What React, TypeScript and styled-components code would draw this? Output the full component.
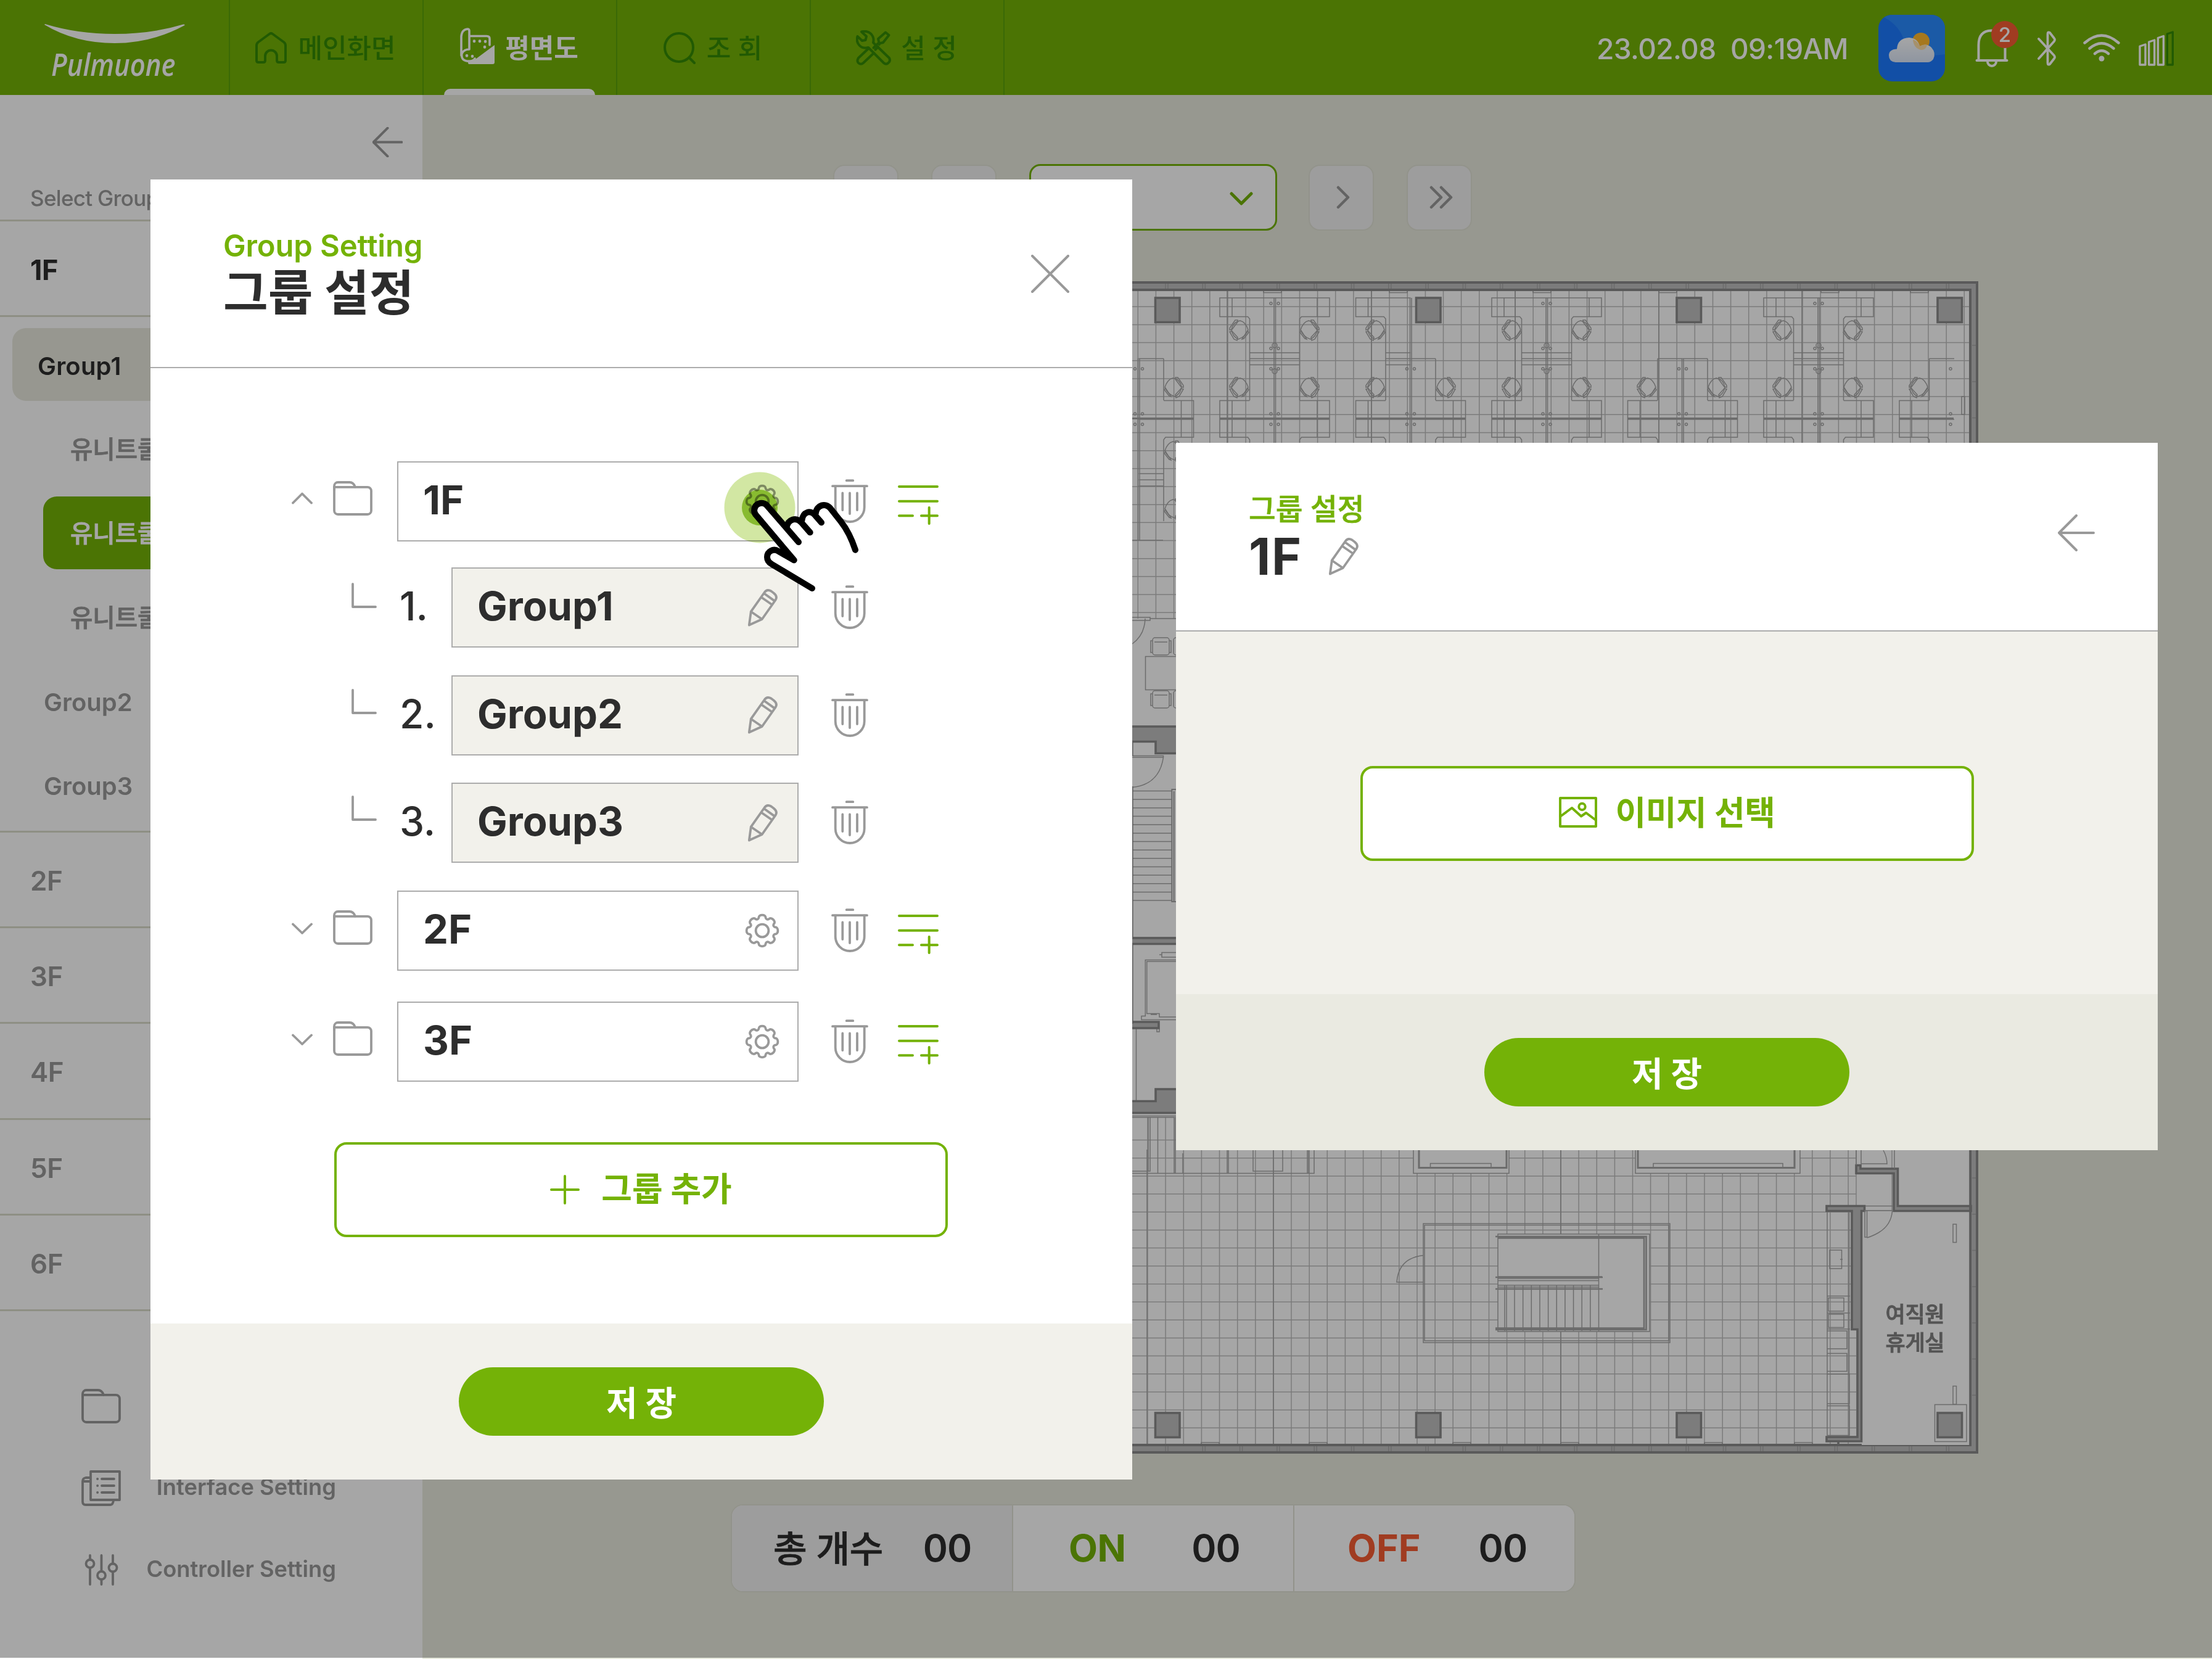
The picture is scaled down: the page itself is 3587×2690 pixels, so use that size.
import React from "react";
import styled, { createGlobalStyle } from "styled-components";

const GREEN = "#74b207";
const DEEP_GREEN = "#348a06";
const INK = "#2d2d2d";
const GRAY = "#999999";
const RULE = "#acacac";
const RED = "#f65c34";
const CANVAS = "#e8eade";

const GlobalStyle = createGlobalStyle`
  *, *::before, *::after { box-sizing: border-box; }
  body { margin: 0; background: ${CANVAS}; }
  svg { display: block; flex: none; }
`;

const Screen = styled.div`
  position: relative;
  width: 3587px;
  height: 2690px;
  overflow: hidden;
  display: flex;
  flex-direction: column;
  background: ${CANVAS};
  font-family: Inter, "Noto Sans CJK KR", sans-serif;
  color: ${INK};
`;

const Label = styled.span<{ $size: number; $weight?: number; $color?: string; $track?: number; $drop?: number; $bolder?: number }>`
  font-size: ${(p) => p.$size}px;
  font-weight: ${(p) => p.$weight ?? 500};
  color: ${(p) => p.$color ?? INK};
  letter-spacing: ${(p) => p.$track ?? 0}em;
  line-height: 1;
  white-space: pre;
  margin-top: ${(p) => p.$drop ?? 0}px;
  -webkit-text-stroke: ${(p) => p.$bolder ?? 0}px currentColor;
`;

/* ---------- icons ---------- */

const Stroke = styled.svg<{ $color?: string; $w?: number }>`
  fill: none;
  stroke: ${(p) => p.$color ?? GRAY};
  stroke-width: ${(p) => p.$w ?? 3.8};
  stroke-linecap: round;
  stroke-linejoin: round;
`;

const FolderIcon = () => (
  <Stroke width="64" height="56" viewBox="0 0 64 56">
    <path d="M2 14V8a6 6 0 0 1 6-6H27Q33 2 36 9.6" />
    <path d="M2 9.8H56a6 6 0 0 1 6 6V48a6 6 0 0 1-6 6H8a6 6 0 0 1-6-6Z" />
  </Stroke>
);

const TrashIcon = () => (
  <Stroke width="60" height="72" viewBox="0 0 60 72">
    <path d="M24.7 2.2H35.3M2 11.2H58M6.7 11.2V45.5a23.5 23.5 0 0 0 47 0V11.2M18.3 22.5V50M30 22.5V56M42 22.5V50" />
  </Stroke>
);

const ListAddIcon = () => (
  <Stroke width="66" height="66" viewBox="0 0 66 66" $color={GREEN} $w={4}>
    <path d="M2 4H64M2 27.7H64M2 51.3H24M38 51.3H64M50.7 38V64" />
  </Stroke>
);

const PencilIcon = () => (
  <Stroke width="48" height="61" viewBox="0 0 48 61">
    <path d="M1.8 58.5L4.8 36.7L26 6.5Q30.5 -0.5 37.5 3.5L41.5 6.5Q48.5 12 44.5 18L22.7 49ZM4.8 36.7L22.7 49M22 13.7L37.5 24.5M26.5 7.5L42 18.6" />
  </Stroke>
);

const gearPath = (() => {
  let d = "";
  for (let i = 0; i < 8; i++) {
    const p = (deg: number, r: number) => {
      const a = ((i * 45 + deg - 90) * Math.PI) / 180;
      return `${(28 + r * Math.cos(a)).toFixed(2)} ${(28 + r * Math.sin(a)).toFixed(2)}`;
    };
    if (i === 0) d += `M${p(-15, 21.6)}`;
    d += `C${p(-13, 27.6)} ${p(13, 27.6)} ${p(15, 21.6)}Q${p(22.5, 18.4)} ${p(30, 21.6)}`;
  }
  return d + "Z";
})();

const GearIcon = () => (
  <Stroke width="56" height="56" viewBox="0 0 56 56">
    <path d={gearPath} />
    <circle cx="28" cy="28" r="10.4" />
  </Stroke>
);

const ChevronIcon = ({ up }: { up?: boolean }) => (
  <Stroke width="34" height="22" viewBox="0 0 34 22">
    <path d={up ? "M2 18.500L17 3.500L32 18.500" : "M2 5.500L17 20L32 5.500"} />
  </Stroke>
);

const ElbowIcon = () => (
  <Stroke width="41" height="41" viewBox="0 0 41 41">
    <path d="M2 2V39H39" />
  </Stroke>
);

const ArrowLeftIcon = ({ size, w }: { size: number; w?: number }) => (
  <Stroke width={size} height={size} viewBox="0 0 60 60" $w={w ?? 4}>
    <path d="M58 30H2M30 2L2 30L30 58" />
  </Stroke>
);

const HomeIcon = () => (
  <Stroke width="51" height="51" viewBox="0 0 51 51" $color={DEEP_GREEN} $w={4}>
    <path d="M28 3L46.5 16.5Q49 18.5 49 22V46Q49 49 46 49H38Q35 49 35 46V39a9.5 9.5 0 0 0-19 0V46Q16 49 13 49H5Q2 49 2 46V22Q2 18.5 4.500 16.5L23 3Q25.500 1.200 28 3Z" />
  </Stroke>
);

const PlanIconBox = styled.div`
  margin-top: -6px;
`;

const PlanIcon = () => (
  <PlanIconBox>
    <Stroke width="56" height="60" viewBox="0 0 56 60" $color="#fff" $w={3.6}>
      <path d="M2 45V14Q3 3 12 2Q15 2 15 5V35Q6 35 3 42Q1 52 11 54Q22 55 24 50M15 13.500H43Q48 13.500 48 18V28" />
      <path fill="#fff" stroke="none" d="M56 28V56Q56 59 53 59H14Q12 57 14 54Q22 55 25 51Z" />
      <path d="M23 21.500V22M32 21.500V22M41 22V22.500M40 31V31.500M11 45V45.500M20 46V46.500" strokeWidth="4.600" />
    </Stroke>
  </PlanIconBox>
);

const SearchIcon = () => (
  <Stroke width="52" height="52" viewBox="0 0 52 52" $color={DEEP_GREEN} $w={4}>
    <circle cx="25" cy="25" r="23" />
    <path d="M42 42L50 50" />
  </Stroke>
);

const ToolsIcon = () => (
  <Stroke width="57" height="57" viewBox="0 0 57 57" $color={DEEP_GREEN} $w={4}>
    <path d="M9 2.500Q18 0 24.500 6Q30 12 28 20L54 45Q56.500 50 52.500 53Q49 56.500 45 53L20 28Q11 30.500 5.500 24.500Q0 18.500 2.500 10L10 17L15.500 16L17 10Z" />
    <path d="M38 23L36 14L48 3.500L53.500 8L44 20L35 22M33 24L28.500 28.500M36 27L31.500 31.500" />
    <path d="M21 29L4 45Q1 50 4 53Q8 56.500 12 53L29 37" />
  </Stroke>
);

const WeatherIcon = () => (
  <svg width="108" height="108" viewBox="0 0 108 108">
    <defs>
      <clipPath id="tile"><rect width="108" height="108" rx="22" /></clipPath>
      <linearGradient id="cloud" x1="0" y1="0" x2="0" y2="1">
        <stop offset="0" stopColor="#ffffff" />
        <stop offset="1" stopColor="#dbe6f7" />
      </linearGradient>
    </defs>
    <g clipPath="url(#tile)">
      <rect width="108" height="108" fill="#1c7aff" />
      <path d="M0 0Q32 12 42 42Q60 72 108 64V0Z" fill="#2a8bff" />
    </g>
    <circle cx="69" cy="43" r="14" fill="#ffb92e" />
    <path d="M28 77Q17 76 17 66Q17 56 30 55.500Q31 38 50 37Q64 38 67 51Q78 45 86 53Q94 62 89 72Q85 77 80 77Z" fill="url(#cloud)" />
    <path d="M56 40Q64 43 67 51Q74 47 79 49Q77 57 69 57Q57 54 56 40Z" fill="#ffdfa6" />
  </svg>
);

const BellIcon = () => (
  <Stroke width="54" height="62" viewBox="0 0 54 62" $color="#fff" $w={4}>
    <path d="M5.500 51V26Q5.500 3 26 2.500Q48.500 3 48.500 26V51M2.500 51H51.500M20 53a7 7 0 0 0 14 0" />
  </Stroke>
);

const BluetoothIcon = () => (
  <Stroke width="30" height="57" viewBox="0 0 30 57" $color="#fff" $w={3.8}>
    <path d="M2 13L27 40Q29 43 27 45L20 54Q16.500 56 16.500 52V5Q16.500 1 20 3L27 12Q29 14 27 17L2 45" />
  </Stroke>
);

const WifiIcon = () => (
  <Stroke width="60" height="46" viewBox="0 0 60 46" $color="#fff" $w={4.4}>
    <path d="M2.500 14.500Q30 -9.500 57.500 14.500M10.500 23.500Q30 7 49.500 23.500M19 32Q30 22.500 41 32" />
    <circle cx="30" cy="40" r="4.500" fill="#fff" stroke="none" />
  </Stroke>
);

const SignalIcon = () => (
  <Stroke width="58" height="57" viewBox="0 0 58 57" $color="#fff" $w={3.4}>
    {[[2, 22], [16.7, 15], [31.400, 8.500]].map(([x, y]) => (
      <path key={x} d={`M${x} ${y + 3}L${x + 9} ${y}V55H${x}Z`} />
    ))}
    <path d="M46.300 5L55.300 2V55H46.300Z" stroke={DEEP_GREEN} />
  </Stroke>
);

const InterfaceIcon = () => (
  <Stroke width="64" height="58" viewBox="0 0 64 58">
    <path d="M15 2H62V48H15ZM15 12H7Q2 13 2 18V51Q2 56 7 56H47Q51 56 52 49M2 18H14M33 14H53M33 25H53M33 36H53M26 14H26.200M26 25H26.200M26 36H26.200" />
  </Stroke>
);

const SlidersIcon = () => (
  <Stroke width="55" height="52" viewBox="0 0 55 52">
    <path d="M9 2V9M9 22V49M27.500 2V28M27.500 41V49M46 2V15.500M46 28.500V49" />
    <circle cx="9" cy="15.500" r="6.500" />
    <circle cx="27.500" cy="34.500" r="6.500" />
    <circle cx="46" cy="22" r="6.500" />
  </Stroke>
);

const ImageIconBox = styled.div`
  margin: -5px 0 0 1px;
`;

const ImageIcon = () => (
  <ImageIconBox>
    <Stroke width="62" height="50" viewBox="0 0 62 50" $color={GREEN} $w={4}>
      <rect x="2" y="2" width="58" height="46" />
      <circle cx="37.500" cy="16" r="5.200" />
      <path d="M2 32L21 18L36 31.500L44 26L60 38" />
    </Stroke>
  </ImageIconBox>
);

/* ---------- header ---------- */

const Header = styled.header`
  height: 154px;
  flex: none;
  display: flex;
  background: ${GREEN};
`;

const LogoBox = styled.div`
  width: 371px;
  padding: 38px 0 0 70px;
`;

const LogoMark = styled.svg`
  overflow: visible;
`;

const LogoName = styled.div`
  margin: -1px 0 0 13px;
  width: 260px;
  font: italic 600 51px/64px "Open Sans", "Noto Sans", sans-serif;
  color: #fff;
  transform: scaleX(0.855);
  transform-origin: left center;
  white-space: pre;
`;

const NavItem = styled.div<{ $active?: boolean; $gap: number }>`
  position: relative;
  width: 314px;
  padding: 1px 2px 0 0;
  border-left: 2px solid #5aa20a;
  display: flex;
  align-items: center;
  justify-content: center;
  gap: ${(p) => p.$gap}px;
  &::after {
    content: "";
    position: absolute;
    display: ${(p) => (p.$active ? "block" : "none")};
    left: 33px;
    bottom: 0;
    width: 245px;
    height: 10px;
    border-radius: 10px 10px 0 0;
    background: #fff;
  }
`;

const HeaderTools = styled.div`
  flex: 1;
  border-left: 2px solid #5aa20a;
  display: flex;
  align-items: center;
  justify-content: flex-end;
  padding-right: 61px;
`;

const Tool = styled.div<{ $left: number; $w?: number }>`
  position: relative;
  margin-left: ${(p) => p.$left}px;
  margin-top: 2px;
  width: ${(p) => (p.$w ? `${p.$w}px` : "auto")};
`;

const Badge = styled.span`
  position: absolute;
  left: 26px;
  top: -13px;
  width: 44px;
  height: 44px;
  border-radius: 50%;
  background: ${RED};
  display: flex;
  align-items: center;
  justify-content: center;
`;

/* ---------- body ---------- */

const Body = styled.div`
  flex: 1;
  display: flex;
  min-height: 0;
`;

const Sidebar = styled.aside`
  width: 685px;
  flex: none;
  background: #fff;
  display: flex;
  flex-direction: column;
`;

const SideTop = styled.div`
  height: 205px;
  flex: none;
  border-bottom: 3px solid #dbdccb;
  display: flex;
  flex-direction: column;
  padding: 52px 32px 0 49px;
`;

const BackRow = styled.div`
  display: flex;
  justify-content: flex-end;
  margin-bottom: 49px;
`;

const FloorRow = styled.div`
  height: 155.15px;
  flex: none;
  border-bottom: 3px solid #dbdccb;
  display: flex;
  align-items: center;
  padding: 4px 0 0 49px;
`;

const GroupList = styled.div`
  height: 836px;
  flex: none;
  border-bottom: 3px solid #dbdccb;
  padding: 18px 20px 0;
  display: flex;
  flex-direction: column;
  gap: 18.3px;
`;

const GroupItem = styled.div<{ $indent: number; $pad: number; $bg?: string }>`
  height: 118px;
  margin-left: ${(p) => p.$indent}px;
  padding: 5px 0 0 ${(p) => p.$pad}px;
  border-radius: 22px;
  background: ${(p) => p.$bg ?? "transparent"};
  display: flex;
  align-items: center;
`;

const SideMenu = styled.div`
  padding: 118px 140px 0 132px;
  display: flex;
  flex-direction: column;
  gap: 61px;
`;

const SideMenuItem = styled.div`
  height: 72px;
  display: flex;
  align-items: center;
  justify-content: space-between;
`;

const IconSlot = styled.div`
  width: 64px;
  display: flex;
  justify-content: center;
`;

const Main = styled.main`
  flex: 1;
  display: flex;
  flex-direction: column;
  align-items: flex-start;
`;

const Pager = styled.div`
  display: flex;
  gap: 53px;
  margin: 112px 0 0 666px;
  height: 108px;
  align-items: center;
`;

const PagerButton = styled.div`
  width: 106px;
  height: 107px;
  border-radius: 18px;
  border: 2px solid #e1e2d6;
  background: #f2f2f1;
  display: flex;
  align-items: center;
  justify-content: center;
  padding-left: 6px;
`;

const PagerSelect = styled.div`
  width: 402px;
  height: 108px;
  margin-right: -2px;
  border-radius: 18px;
  border: 3px solid ${GREEN};
  background: #fff;
  display: flex;
  align-items: center;
  justify-content: flex-end;
  padding: 3px 36px 0 0;
`;

const PlanFrame = styled.div`
  margin: 82px 0 0 379px;
  height: 1900px;
`;

const Summary = styled.div`
  margin: 83px 0 0 500px;
  height: 143px;
  width: 1370px;
  border: 2px solid #e1e2d6;
  border-radius: 20px;
  background: #fff;
  overflow: hidden;
  display: flex;
`;

const SummaryCell = styled.div<{ $gap: number; $pad: number; $tint?: boolean }>`
  width: ${(p) => (p.$tint ? 454 : 456)}px;
  flex: none;
  display: flex;
  align-items: center;
  padding-left: ${(p) => p.$pad}px;
  gap: ${(p) => p.$gap}px;
  background: ${(p) => (p.$tint ? "#f2f2f1" : "#fff")};
  & + & { border-left: 2px solid #e1e2d6; }
`;

const Dim = styled.div`
  position: absolute;
  inset: 0 0 2px 0;
  background: rgba(0, 0, 0, 0.35);
`;

/* ---------- dialogs ---------- */

const Dialog = styled.section<{ $x: number; $y: number; $h: number }>`
  position: absolute;
  left: ${(p) => p.$x}px;
  top: ${(p) => p.$y}px;
  width: 1592px;
  height: ${(p) => p.$h}px;
  background: #fff;
  display: flex;
  flex-direction: column;
`;

const DialogHead = styled.div`
  height: 306px;
  flex: none;
  border-bottom: 2px solid ${RULE};
  display: flex;
  justify-content: space-between;
  padding: 0 102px 0 118px;
`;

const DialogTitle = styled.div<{ $top: number; $gap: number }>`
  display: flex;
  flex-direction: column;
  padding-top: ${(p) => p.$top}px;
  gap: ${(p) => p.$gap}px;
`;

const TitleLine = styled.div`
  display: flex;
  align-items: center;
  gap: 43px;
`;

const HeadAction = styled.div<{ $top: number }>`
  padding-top: ${(p) => p.$top}px;
`;

const Tree = styled.div`
  flex: 1;
  padding: 151px 0 0 229px;
  display: flex;
  flex-direction: column;
  align-items: flex-start;
`;

const TreeRow = styled.div<{ $gap: number }>`
  height: 130px;
  margin-bottom: ${(p) => p.$gap}px;
  display: flex;
  align-items: center;
`;

const FloorLead = styled.div`
  width: 171px;
  display: flex;
  align-items: center;
  gap: 33px;
  padding-bottom: 10px;
`;

const ChildLead = styled.div`
  width: 259px;
  display: flex;
  align-items: center;
  padding-left: 97px;
`;

const ElbowSlot = styled.div<{ $lift: number }>`
  width: 78px;
  padding-bottom: ${(p) => p.$lift}px;
`;

const NameBox = styled.div<{ $child?: boolean }>`
  width: ${(p) => (p.$child ? 563 : 651)}px;
  height: 130px;
  border: 2px solid ${RULE};
  background: ${(p) => (p.$child ? "#f2f1eb" : "#fff")};
  display: flex;
  align-items: center;
  justify-content: space-between;
  padding: 0 ${(p) => (p.$child ? 32 : 29)}px 0 40px;
`;

const TrashSlot = styled.div`
  margin: 0 48px 0 53px;
`;

const ListSlot = styled.div`
  padding-top: 9px;
`;

const OutlineButton = styled.div<{ $gap: number; $top: number }>`
  width: 995px;
  height: 154px;
  margin: ${(p) => p.$top}px auto 0;
  border: 4px solid ${GREEN};
  border-radius: 20px;
  background: #fff;
  display: flex;
  align-items: center;
  justify-content: center;
  gap: ${(p) => p.$gap}px;
`;

const TreeButtonSlot = styled.div`
  margin-left: 69px;
`;

const DialogBody = styled.div`
  flex: 1;
  background: #f2f1eb;
`;

const DialogFoot = styled.div<{ $bg: string }>`
  height: 253px;
  flex: none;
  background: ${(p) => p.$bg};
  display: flex;
  justify-content: center;
  padding-top: 71px;
`;

const SaveButton = styled.div`
  width: 592px;
  height: 111px;
  border-radius: 56px;
  background: ${GREEN};
  display: flex;
  align-items: center;
  justify-content: center;
`;

const Halo = styled.svg`
  position: absolute;
  left: 1174px;
  top: 765px;
  mix-blend-mode: multiply;
`;

const Pointer = styled.svg`
  position: absolute;
  left: 1130px;
  top: 700px;
`;

/* ---------- floor plan ---------- */

const PLAN_X = 1064;
const PLAN_Y = 456;
const LINE = "#bebebe";
const MID = "#a6a6a6";
const WALL = "#8a8a8a";
const FILL = "#bfbfbf";

const range = (from: number, to: number, step: number) => {
  const out: number[] = [];
  for (let v = from; v <= to; v += step) out.push(v);
  return out;
};

const gridPath = (x0: number, x1: number, y0: number, y1: number, gx: number, gy: number) =>
  range(gx, x1, 29.13).map((x) => `M${x.toFixed(1)} ${y0}V${y1}`).join("") +
  range(gy, y1, 29.17).map((y) => `M${x0} ${y.toFixed(1)}H${x1}`).join("");

const Chair = ({ x, y, flip }: { x: number; y: number; flip: number }) => (
  <g transform={`translate(${x} ${y}) scale(${flip} 1)`}>
    <path d="M0 -15Q12 -13 14 0Q12 11 3 15Q-9 11 -13 0Q-9 -13 0 -15Z" />
    <path d="M4 -16L8 -16L17 -3L17 0L13 -1L4 -13ZM-3 15L-6 14L-14 4L-12 1ZM13 2L17 3L10 15L5 17L4 12Z" />
  </g>
);

const Desk = ({ cx, dir, top }: { cx: number; dir: number; top: boolean }) => {
  const o = cx + dir * 89;
  const m = cx + dir * 69;
  const i = cx + dir * 40.5;
  return (
    <path
      d={
        (top ? `M${cx} 483H${o}V513.500H${i + dir * 3}L${i} 517V649M${m} 483V513.500M${i} 572H${cx}M${i} 591.500H${cx}` : `M${i} 581.500V649`) +
        `M${i} 581.500H${cx}M${i} 649.500H${o}V709H${i + dir * 3}L${i} 713V845M${m} 649.500V709M${o} 680H${cx}M${i} 768H${cx}M${i} 778H${cx}M${i} 788H${cx}`
      }
    />
  );
};

const deskUnits: [number, number, boolean][] = [
  [1846.500, 1, false], [2067, -1, true], [2067, 1, true], [2287.500, -1, true], [2287.500, 1, false],
  [2508, -1, true], [2508, 1, true], [2728.500, -1, false], [2728.500, 1, false],
  [2949, -1, true], [2949, 1, true], [3169, -1, false],
];

const FloorPlan = () => (
  <svg width="2144" height="1901" viewBox={`${PLAN_X} ${PLAN_Y} 2144 1901`} fill="none" stroke={LINE} strokeWidth="1.500">
    <rect x="1066" y="458" width="2140" height="1897" fill={FILL} stroke={WALL} strokeWidth="4" />
    <path d={range(1890, 3180, 60.300).map((x) => `M${x} 460V468M${x + 4} 460V468M${x} 2345V2353M${x + 4} 2345V2353`).join("") + range(560, 2300, 58.700).map((y) => `M3198 ${y}H3204`).join("")} stroke={MID} />
    <rect x="1080" y="470" width="2115" height="1873" fill="#fff" stroke={WALL} strokeWidth="4" />
    <path d={gridPath(1080, 3193, 472, 1003, 1845.300, 497.300)} />
    <path d={gridPath(1080, 3010, 1812, 2341, 1861, 1848.600)} />
    <path d="M1860 1864V2341M2531 1812V2341M2065 1812V2341M1990 472V718M2224 472V718M2457 472V718M2690 472V718M2922 472V718" stroke={MID} />
    <path d="M3010 1812H3068V1963H3010Z" />

    {/* office furniture */}
    <g stroke={MID}>
      {deskUnits.map(([cx, dir, top]) => <Desk key={`${cx}${dir}`} cx={cx} dir={dir} top={top} />)}
      {[1846.500, 2067, 2287.500, 2508, 2728.500, 2949].map((x, i) => {
        const y = i % 2 || i === 2 ? 483 : 581;
        return <path key={x} d={`M${x - 1} ${y}V876M${x + 1.500} ${y}V876`} />;
      })}
      {[1846.500, 2067, 2287.500, 2508, 2728.500, 2949, 3169].map((x) => (
        <g key={x}>
          <path d={`M${x - 89} 678.500H${Math.min(x + 89, 3168)}`} strokeWidth="3" />
          {[598, 671, 688].map((y) => (
            <g key={y}><circle cx={x - 6} cy={y} r="2" />{x < 3100 && <circle cx={x + 6} cy={y} r="2" />}</g>
          ))}
        </g>
      ))}
      {[2067, 2508, 2949].map((x) => (
        <g key={x}>
          {[492, 565].map((y) => (
            <g key={y}><circle cx={x - 6} cy={y} r="2" /><circle cx={x + 6} cy={y} r="2" /></g>
          ))}
          <circle cx={x} cy="560" r="4" />
          <circle cx={x} cy="602" r="4" />
        </g>
      ))}
      {[2011, 2122, 2232, 2453, 2563, 2892, 3003].map((x) => <Chair key={x} x={x} y={535} flip={[2122, 2563, 3003].includes(x) ? 1 : -1} />)}
      {[1902, 2011, 2122, 2232, 2343, 2453, 2563, 2672, 2783, 2892, 3003, 3113].map((x, i) => <Chair key={x} x={x} y={628} flip={i % 2 ? -1 : 1} />)}
      <Chair x={1902} y={731} flip={1} />
      <Chair x={1902} y={825} flip={1} />
      {[[2049, 472], [2253, 472], [2486, 472], [2690, 472], [2953, 472], [3098, 472], [1948, 2339], [2123, 2339], [2356, 2339], [2531, 2339], [2764, 2339], [2910, 2339]].map(([x, y]) => (
        <path key={x} d={y < 1000 ? `M${x} 472V474.500H${x + 29}V472` : `M${x} 2341V2339H${x + 29}V2341`} />
      ))}
      <path d="M3181 643V672H3186V643Z" />
    </g>

    {/* meeting room, stair and lift core */}
    <g stroke={MID}>
      <path d="M1836 876H1886M1836 1001H1865V1006H1836M1865 1003H1907" />
      <path d="M1857 1003Q1856 1030 1836 1044" />
      <rect x="1857.500" y="1064.500" width="80" height="54" />
      {[1034, 1120].map((y) => (
        <g key={y}>
          <rect x="1869" y={y} width="27" height="28" rx="4" />
          <path d={`M1869 ${y + 5}H1866V${y + 24}H1869M1896 ${y + 5}H1899V${y + 24}H1896M1872 ${y + 7}H1893`} />
          <rect x="1903" y={y} width="27" height="28" rx="4" />
        </g>
      ))}
      <path d="M1836 1177V1220H1907V1177Z" fill={FILL} stroke="none" />
      <path d="M1836 1202H1873V1240H1836Z" fill="#fff" stroke="none" />
      <path d="M1836 1225.500H1886.500V1228H1836M1886.500 1228Q1880 1272 1836.700 1276.500" />
      <path d={range(1282.600, 1461, 13.650).map((y) => `M1836 ${y.toFixed(1)}H1900`).join("")} />
      <path d="M1910 1280H1900.300V1462H1910M1903.700 1283V1462" strokeWidth="2" />
      <path d="M1836 1519H1907V1532H1836Z" fill={FILL} stroke="none" />
      <path d="M1884 1544.500H1910V1552H1884ZM1880 1548H1884M1910 1556.500H1857.300V1647.500H1851V1653.500H1910M1910 1559H1859.700V1643.500H1880V1649H1910M1866 1645H1876" />
      <rect x="1836" y="1656" width="44" height="11" fill={FILL} stroke="none" />
      <path d="M1842.500 1668V1784M1876 1668V1673H1880V1668" />
      <path d="M1836 1786H1874V1766H1910V1804H1836Z" fill={FILL} stroke="none" />
      <path d="M1836 1809.500H1907M1836 1811.700H1904M1862 1811V1899M1877.500 1811V1902M1904 1811V1902M1906 1811V1902M1918 1870V1902M1836 1902.500H2131V1865M1865 1811V1899H1836M1992 1865V1902M1990 1865V1902M2032 1865V1899H2080V1865M2120 1865V1902M2122 1865V1902" />
      <path d="M2292 1860V1902.500H2447V1860M2652 1860V1902.500H2919V1860" fill="#fff" />
      <path d="M2301 1860V1893.500H2443V1860M2656 1860V1893.500H2910V1860" strokeWidth="3" />
      <path d="M2319.500 1893V1886.500H2418V1893M2681 1893V1886.500H2891V1893" />
    </g>
    <g stroke={WALL} strokeWidth="3.600">
      <path d="M1836 1178H1910M1836 1202.500H1874V1221.500H1910M1836 1521H1910M1836 1530.500H1910M1836 1657H1879V1667H1836M1836 1785.500H1874V1766H1910M1836 1804.500H1910" />
      <path d="M1836.500 1202V1226M1836.500 1275V1521M1836.500 1530V1660" strokeWidth="2" />
    </g>

    {/* central staircase */}
    <g stroke={MID}>
      <rect x="2308" y="1984" width="400" height="193" />
      <rect x="2310" y="1986.500" width="396" height="187.500" />
      <rect x="2429" y="2001" width="246" height="158" fill="#fff" />
      <path d="M2592.500 2001V2159M2429 2070H2598M2429 2073H2592M2429 2076.500H2592M2429 2084H2592M2429 2087H2592" />
      <path d="M2425 2005H2669.500V2156H2425M2429 2007.500H2666V2153.500H2425M2425 2071H2599M2425 2090H2599" strokeWidth="2.600" />
      <path d={[2440, 2443, ...range(2456, 2580, 13.650)].map((x) => `M${x} 2084V2158`).join("")} />
      <path d="M2308 2079H2265Q2268 2040 2308 2035.500" />
    </g>

    {/* rest room wing */}
    <path d="M3019 1963H3195V2343H3019ZM3078 1812H3195V1960H3078Z" fill="#fff" stroke="none" />
    <g stroke={WALL} strokeWidth="3.600">
      <path d="M3010 1889.500H3017V1895H3077.500V1955.500H3196V1963.500H3071V1902.500H3010Z" fill={FILL} />
      <path d="M2962 1955.500H3023.500V1963.500H3018.500V2337H2962V2330H3012V2155.500H3003V1963.500H2962Z" fill={FILL} />
      <path d="M2981 2338V2343" />
      <path d="M3195 1850V2343" />
    </g>
    <g stroke={MID}>
      <path d="M3010 1860V1889M3018 1865V1887H3060M3054 1865Q3060 1876 3060 1888M3072 1860V1895M3025 1955.500H3069M3025 1963H3069M3024 1963H3027.500V2006H3024ZM3027.500 2007Q3066 1995 3068.500 1964" />
      <path d="M2963 1965V2329M2998.500 1965V2329M2967 2027H2986.500V2057H2967ZM2984 2042H2988M2963 2101.500H3000M2965 2104.500H2990V2126H2965ZM2963 2129H3000M2965 2131H2990V2152.500H2965ZM2963 2155H3000M2963 2158H2995V2187H2963ZM2963 2194.500H2995V2223.500H2963ZM2963 2228H2999V2276H2963ZM2963 2279.500H2999V2327.500H2963Z" />
      <path d="M3167 1985H3172.500V2014.500H3167ZM3167 2247.500H3172.500V2277H3167ZM3137.500 2277.500H3189V2337.500H3137.500Z" />
    </g>
    {[1873.500, 2296.500, 2719, 3142].map((x) => (
      <g key={x} fill={FILL} stroke={WALL} strokeWidth="3.600">
        <rect x={x} y="483" width="39.500" height="39.500" />
        <rect x={x} y="2291" width="39.500" height="39.500" />
      </g>
    ))}
    <g fill="#828282" stroke="#828282" strokeWidth="0.9" fontSize="35" fontWeight="500" textAnchor="middle">
      <text x="3105.500" y="2144" textLength="96">여직원</text>
      <text x="3105.500" y="2189.500" textLength="96">휴게실</text>
    </g>
  </svg>
);

/* ---------- composition ---------- */

const children = [
  { n: "1.", name: "Group1", lift: 39, gap: 44.500 },
  { n: "2.", name: "Group2", lift: 44, gap: 44.500 },
  { n: "3.", name: "Group3", lift: 48, gap: 45 },
];

const Floor = ({ name, open, gap }: { name: string; open?: boolean; gap: number }) => (
  <TreeRow $gap={gap}>
    <FloorLead><ChevronIcon up={open} /><FolderIcon /></FloorLead>
    <NameBox>
      <Label $size={65} $weight={700} $drop={-5}>{name}</Label>
      <GearIcon />
    </NameBox>
    <TrashSlot><TrashIcon /></TrashSlot>
    <ListSlot><ListAddIcon /></ListSlot>
  </TreeRow>
);

export default function App() {
  return (
    <Screen>
      <GlobalStyle />
      <Header>
        <LogoBox>
          <LogoMark width="234" height="34" viewBox="0 0 234 34">
            <path d="M2 2Q3 .5 5 1.500Q56 17 116 17Q176 17 227 1.500Q230 1 229.500 3Q176 32 116 32Q52 32 2 2Z" fill="#fff" />
          </LogoMark>
          <LogoName>Pulmuone</LogoName>
        </LogoBox>
        <NavItem $gap={18}><HomeIcon /><Label $size={43} $color={DEEP_GREEN} $drop={2}>메인화면</Label></NavItem>
        <NavItem $gap={17} $active><PlanIcon /><Label $size={43} $weight={700} $color="#fff" $drop={2}>평면도</Label></NavItem>
        <NavItem $gap={18}><SearchIcon /><Label $size={43} $color={DEEP_GREEN} $drop={2}>조 회</Label></NavItem>
        <NavItem $gap={16}><ToolsIcon /><Label $size={43} $color={DEEP_GREEN} $drop={2}>설 정</Label></NavItem>
        <HeaderTools>
          <Label $size={46} $color="#fff" $track={-0.013} $drop={4}>23.02.08  09:19AM</Label>
          <Tool $left={49}><WeatherIcon /></Tool>
          <Tool $left={49} $w={70}>
            <BellIcon />
            <Badge><Label $size={33} $color="#fff">2</Label></Badge>
          </Tool>
          <Tool $left={31}><BluetoothIcon /></Tool>
          <Tool $left={44}><WifiIcon /></Tool>
          <Tool $left={30}><SignalIcon /></Tool>
        </HeaderTools>
      </Header>

      <Body>
        <Sidebar>
          <SideTop>
            <BackRow><ArrowLeftIcon size={49} w={5} /></BackRow>
            <Label $size={35} $color={GRAY} $track={-0.02}>Select Group</Label>
          </SideTop>
          <FloorRow><Label $size={45} $weight={700} $track={-0.01}>1F</Label></FloorRow>
          <GroupList>
            <GroupItem $indent={0} $pad={41} $bg="#e8e9dd"><Label $size={40} $weight={600} $track={0.005}>Group1</Label></GroupItem>
            <GroupItem $indent={50} $pad={44}><Label $size={39.500} $weight={500} $color={GRAY} $bolder={0.9}>유니트쿨러1</Label></GroupItem>
            <GroupItem $indent={50} $pad={44} $bg={GREEN}><Label $size={39.500} $weight={500} $color="#fff" $bolder={0.9}>유니트쿨러2</Label></GroupItem>
            <GroupItem $indent={50} $pad={44}><Label $size={39.500} $weight={500} $color={GRAY} $bolder={0.9}>유니트쿨러3</Label></GroupItem>
            <GroupItem $indent={0} $pad={51}><Label $size={40} $weight={600} $color={GRAY}>Group2</Label></GroupItem>
            <GroupItem $indent={0} $pad={51}><Label $size={40} $weight={600} $color={GRAY}>Group3</Label></GroupItem>
          </GroupList>
          {["2F", "3F", "4F", "5F", "6F"].map((f) => (
            <FloorRow key={f}><Label $size={44} $weight={600} $color={GRAY} $track={-0.01}>{f}</Label></FloorRow>
          ))}
          <SideMenu>
            <SideMenuItem><IconSlot><FolderIcon /></IconSlot><Label $size={36.300} $weight={600} $color={GRAY} $drop={-4}>Group Setting</Label></SideMenuItem>
            <SideMenuItem><IconSlot><InterfaceIcon /></IconSlot><Label $size={36.300} $weight={600} $color={GRAY} $drop={-4}>Interface Setting</Label></SideMenuItem>
            <SideMenuItem><IconSlot><SlidersIcon /></IconSlot><Label $size={36.300} $weight={600} $color={GRAY} $drop={-4}>Controller Setting</Label></SideMenuItem>
          </SideMenu>
        </Sidebar>

        <Main>
          <Pager>
            <PagerButton />
            <PagerButton />
            <PagerSelect>
              <Stroke width="38" height="22" viewBox="0 0 38 22" $color={GREEN} $w={5}><path d="M3 3L19 19L35 3" /></Stroke>
            </PagerSelect>
            <PagerButton>
              <Stroke width="22" height="38" viewBox="0 0 22 38" $w={4.500}><path d="M3 3L19 19L3 35" /></Stroke>
            </PagerButton>
            <PagerButton>
              <Stroke width="38" height="38" viewBox="0 0 38 38" $w={4.500}><path d="M3 3L19 19L3 35M19 3L35 19L19 35" /></Stroke>
            </PagerButton>
          </Pager>
          <PlanFrame><FloorPlan /></PlanFrame>
          <Summary>
            <SummaryCell $pad={67} $gap={65} $tint>
              <Label $size={59.500} $weight={500} $track={-0.01} $drop={2} $bolder={0.7}>총 개수</Label>
              <Label $size={61} $weight={600} $track={-0.015}>00</Label>
            </SummaryCell>
            <SummaryCell $pad={90} $gap={107}>
              <Label $size={61} $weight={700} $color={GREEN} $track={-0.01}>ON</Label>
              <Label $size={61} $weight={600} $track={-0.015}>00</Label>
            </SummaryCell>
            <SummaryCell $pad={86} $gap={94}>
              <Label $size={61} $weight={700} $color={RED} $track={0}>OFF</Label>
              <Label $size={61} $weight={600} $track={-0.015}>00</Label>
            </SummaryCell>
          </Summary>
        </Main>
      </Body>

      <Dim />

      <Dialog $x={244} $y={291} $h={2108}>
        <DialogHead>
          <DialogTitle $top={83} $gap={13}>
            <Label $size={49} $weight={600} $color={GREEN} $track={-0.003}>Group Setting</Label>
            <Label $size={79} $weight={700}>그룹 설정</Label>
          </DialogTitle>
          <HeadAction $top={122}>
            <Stroke width="62" height="62" viewBox="0 0 62 62" $w={4}><path d="M2 2L60 60M60 2L2 60" /></Stroke>
          </HeadAction>
        </DialogHead>
        <Tree>
          <Floor name="1F" open gap={42} />
          {children.map((c) => (
            <TreeRow key={c.n} $gap={c.gap}>
              <ChildLead>
                <ElbowSlot $lift={c.lift}><ElbowIcon /></ElbowSlot>
                <Label $size={64} $weight={500} $drop={-4}>{c.n}</Label>
              </ChildLead>
              <NameBox $child>
                <Label $size={65} $weight={700} $drop={-5}>{c.name}</Label>
                <PencilIcon />
              </NameBox>
              <TrashSlot><TrashIcon /></TrashSlot>
            </TreeRow>
          ))}
          <Floor name="2F" gap={49.500} />
          <Floor name="3F" gap={0} />
          <TreeButtonSlot>
            <OutlineButton $gap={35} $top={98}>
              <Stroke width="48" height="48" viewBox="0 0 48 48" $color={GREEN} $w={4}><path d="M2 24H46M24 2V46" /></Stroke>
              <Label $size={54} $weight={700} $color={GREEN}>그룹 추가</Label>
            </OutlineButton>
          </TreeButtonSlot>
        </Tree>
        <DialogFoot $bg="#f2f1eb">
          <SaveButton><Label $size={55} $weight={700} $color="#fff" $drop={5}>저 장</Label></SaveButton>
        </DialogFoot>
      </Dialog>

      <Dialog $x={1907} $y={718} $h={1147}>
        <DialogHead>
          <DialogTitle $top={84} $gap={12}>
            <Label $size={47.500} $weight={500} $color={GREEN} $bolder={0.7}>그룹 설정</Label>
            <TitleLine>
              <Label $size={82} $weight={700} $track={0.02}>1F</Label>
              <PencilIcon />
            </TitleLine>
          </DialogTitle>
          <HeadAction $top={116}><ArrowLeftIcon size={60} /></HeadAction>
        </DialogHead>
        <DialogBody>
          <OutlineButton $gap={29} $top={218}>
            <ImageIcon />
            <Label $size={54} $weight={700} $color={GREEN} $track={-0.006}>이미지 선택</Label>
          </OutlineButton>
        </DialogBody>
        <DialogFoot $bg="#eaeae1">
          <SaveButton><Label $size={55} $weight={700} $color="#fff" $drop={5}>저 장</Label></SaveButton>
        </DialogFoot>
      </Dialog>

      <Halo width="116" height="116" viewBox="0 0 116 116">
        <circle cx="58" cy="58" r="57.500" fill="#d2e7a3" />
        <circle cx="58" cy="58" r="29" fill="#88bb30" />
      </Halo>
      <Pointer width="280" height="270" viewBox="0 0 840 810">
        <path
          d="M561 762L364 644Q342 632 342 610A35 35 0 0 1 396 581L473 625L290 408A35.500 35.500 0 1 1 345 364L436 470Q440 428 478 428Q495 428 510 444L512 430Q520 392 548 392Q562 392 575 406L578 392Q584 358 612 358Q632 358 648 374L700 436Q744 492 771 575Z"
          fill="#fff"
        />
        <path
          d="M561 762L364 644Q342 632 342 610A35 35 0 0 1 396 581L473 625L290 408A35.500 35.500 0 1 1 345 364L495 537M437 466C442 425 482 414 508 441L551 490M511 432C516 388 554 380 574 405L606 442M578 398C582 356 626 344 650 373L700 436Q744 492 771 575"
          fill="none"
          stroke="#000"
          strokeWidth="30"
          strokeLinecap="round"
          strokeLinejoin="round"
        />
      </Pointer>
    </Screen>
  );
}
